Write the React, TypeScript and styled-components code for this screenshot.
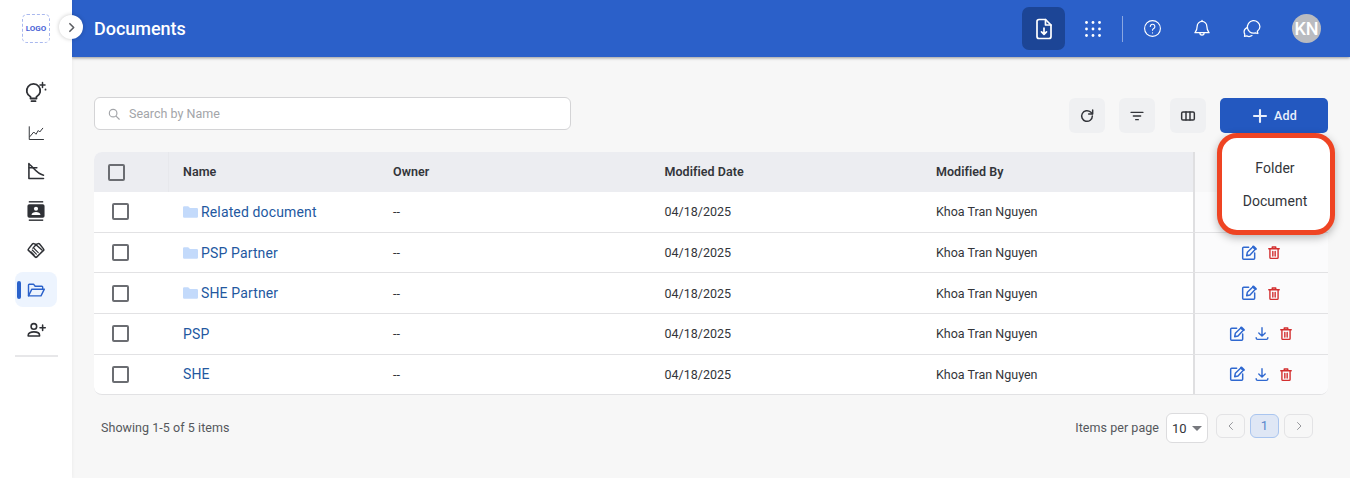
import React from "react";
import styled, { createGlobalStyle } from "styled-components";

const Global = createGlobalStyle`
  html, body { margin: 0; padding: 0; background: #f7f7f7; }
  body { font-family: Roboto, "Liberation Sans", sans-serif; color: #2f3136; }
  * { box-sizing: border-box; }
`;

const Page = styled.div`
  display: flex;
  width: 1350px;
  height: 478px;
  overflow: hidden;
  position: relative;
`;

const Sidebar = styled.aside`
  width: 72px;
  flex: none;
  background: #fff;
  display: flex;
  flex-direction: column;
  align-items: center;
  padding-top: 14px;
  position: relative;
  z-index: 3;
  box-shadow: 1px 0 3px rgba(0, 0, 0, 0.04);
`;

const Logo = styled.div`
  width: 28px;
  height: 29px;
  border: 1px dashed #a9b8ee;
  border-radius: 5px;
  display: flex;
  align-items: center;
  justify-content: center;
  color: #4a63d6;
  font-size: 8px;
  font-weight: 700;
  margin-bottom: 31.5px;
`;

const Toggle = styled.button`
  position: absolute;
  left: 59px;
  top: 15px;
  width: 24px;
  height: 24px;
  padding: 0;
  border: none;
  border-radius: 50%;
  background: #fff;
  box-shadow: 0 0 4px rgba(0, 0, 0, 0.22);
  color: #5c5e63;
  display: flex;
  align-items: center;
  justify-content: center;
`;

const NavItem = styled.div<{ $active?: boolean }>`
  width: 42px;
  height: 35px;
  margin-bottom: 4.6px;
  border-radius: 8px;
  display: flex;
  align-items: center;
  justify-content: center;
  position: relative;
  background: ${(p) => (p.$active ? "#edf4fe" : "transparent")};
  color: ${(p) => (p.$active ? "#2b62cb" : "#2f3136")};
`;

const ActiveMark = styled.span`
  position: absolute;
  left: 2px;
  top: 9px;
  width: 4px;
  height: 18px;
  border-radius: 2px;
  background: #2b62cb;
`;

const NavRule = styled.div`
  width: 43px;
  height: 2px;
  background: #e7e7e9;
  margin-top: 3px;
`;

const Main = styled.main`
  flex: 1;
  min-width: 0;
  display: flex;
  flex-direction: column;
`;

const Header = styled.header`
  height: 57px;
  flex: none;
  background: #2b60c9;
  box-shadow: 0 1px 3px rgba(0, 0, 0, 0.4);
  display: flex;
  align-items: center;
  padding: 0 29px 0 22px;
  color: #fff;
  position: relative;
  z-index: 2;
`;

const Title = styled.h1`
  margin: 0;
  font-size: 18px;
  font-weight: 500;
  letter-spacing: -0.02px;
  flex: 1;
`;

const HeaderActive = styled.div`
  width: 43px;
  height: 43px;
  background: #1c4596;
  border-radius: 7px;
  display: flex;
  align-items: center;
  justify-content: center;
  margin-right: 18px;
`;

const HeaderIcon = styled.div<{ $gap: number }>`
  width: 20px;
  height: 24px;
  display: flex;
  align-items: center;
  justify-content: center;
  margin-right: ${(p) => p.$gap}px;
`;

const HeaderRule = styled.div`
  width: 1px;
  height: 26px;
  background: rgba(255, 255, 255, 0.45);
  margin-right: 19px;
`;

const Avatar = styled.div`
  width: 29px;
  height: 29px;
  border-radius: 50%;
  background: #b9bbc0;
  color: #fff;
  font-size: 18px;
  font-weight: 500;
  display: flex;
  align-items: center;
  justify-content: center;
`;

const Content = styled.div`
  flex: 1;
  padding: 40px 22px 0;
  position: relative;
`;

const Toolbar = styled.div`
  display: flex;
  align-items: flex-start;
  height: 36px;
`;

const Search = styled.div`
  width: 477px;
  height: 33px;
  border: 1px solid #d4d4d6;
  border-radius: 6px;
  background: #fff;
  display: flex;
  align-items: center;
  padding-left: 12px;
  gap: 8px;
  color: #a3a5a9;
  font-size: 12.5px;
`;

const Tools = styled.div`
  margin-left: auto;
  display: flex;
  gap: 14.5px;
  margin-top: 1px;
`;

const ToolButton = styled.button`
  width: 36px;
  height: 35px;
  padding: 0;
  border: none;
  border-radius: 6px;
  background: #eff0f2;
  color: #33353a;
  display: flex;
  align-items: center;
  justify-content: center;
`;

const AddButton = styled.button`
  width: 108px;
  height: 35px;
  padding: 0;
  border: none;
  border-radius: 5px;
  background: #2358c0;
  color: #e9effb;
  font: 500 12.5px Roboto, sans-serif;
  letter-spacing: 0.2px;
  display: flex;
  align-items: center;
  justify-content: center;
  gap: 5px;
`;

const Menu = styled.div`
  position: absolute;
  left: 1145px;
  top: 76px;
  width: 118px;
  height: 102px;
  background: #fff;
  border: 5px solid #ef4423;
  border-radius: 20px;
  box-shadow: 0 3px 8px rgba(0, 0, 0, 0.28);
  z-index: 5;
  display: flex;
  flex-direction: column;
  align-items: center;
  padding: 13px 2px 0 0;
`;

const MenuItem = styled.div`
  height: 33px;
  display: flex;
  align-items: center;
  font-size: 14px;
  letter-spacing: 0.05px;
  color: #33353a;
`;

const Table = styled.div`
  margin-top: 19.2px;
  background: #fff;
  border-radius: 8px;
  border-bottom: 1px solid #e2e2e4;
  overflow: hidden;
`;

const columns = "75px 210px 271.5px 271.5px 271px 1fr";

const HeadRow = styled.div`
  display: grid;
  grid-template-columns: ${columns};
  height: 40px;
  background: #ecedf1;
  font-size: 12.5px;
  font-weight: 600;
  letter-spacing: 0.05px;
  color: #33353a;
`;

const Row = styled.div`
  display: grid;
  grid-template-columns: ${columns};
  height: 40.6px;
  font-size: 12.5px;
  color: #33353a;
  border-bottom: 1px solid #e2e2e4;
  &:last-child {
    height: 39.6px;
    border-bottom: none;
  }
`;

const Cell = styled.div`
  display: flex;
  align-items: center;
  padding-left: 14px;
`;

const HeadCell = styled(Cell)`
  padding-bottom: 1px;
`;

const CheckCell = styled.div`
  display: flex;
  align-items: center;
  padding-left: 18px;
`;

const HeadCheckCell = styled(CheckCell)`
  padding-left: 14px;
  border-right: 1px solid #e7e8ec;
`;

const Check = styled.span`
  width: 17px;
  height: 17px;
  border: 2px solid #6b6d72;
  border-radius: 2px;
  background: #fff;
  display: block;
`;

const HeadCheck = styled(Check)`
  background: transparent;
`;

const NameLink = styled.a`
  color: #23589f;
  font-size: 14px;
  letter-spacing: 0.14px;
  display: flex;
  align-items: center;
  gap: 3px;
`;

const ActionCell = styled.div`
  border-left: 2px solid #dfdfe1;
  background: #fbfbfc;
  display: flex;
  align-items: center;
  justify-content: center;
  gap: 10px;
  padding-right: 2px;
`;

const ActionHead = styled.div`
  border-left: 2px solid #dfdfe1;
  background: #f7f7f8;
`;

const Footer = styled.div`
  display: flex;
  align-items: center;
  margin-top: 16.5px;
  padding: 0 15px 0 7px;
  height: 32px;
  font-size: 12.5px;
  color: #55575c;
  letter-spacing: 0.05px;
`;

const PerPage = styled.span`
  margin-left: auto;
  margin-right: 7px;
`;

const PageSelect = styled.div`
  width: 42px;
  height: 30px;
  border: 1px solid #dcdcde;
  border-radius: 6px;
  background: #fff;
  display: flex;
  align-items: center;
  justify-content: space-between;
  padding: 0 5px 0 5px;
  color: #33353a;
  font-size: 13px;
  margin-right: 8px;
  margin-top: 1px;
`;

const Caret = styled.span`
  width: 0;
  height: 0;
  border-left: 5px solid transparent;
  border-right: 5px solid transparent;
  border-top: 5px solid #77797e;
`;

const PageBtn = styled.div<{ $current?: boolean }>`
  width: 29px;
  height: 24px;
  margin-right: 5px;
  border-radius: 6px;
  border: 1px solid ${(p) => (p.$current ? "#a9c5ef" : "#e3e3e5")};
  background: ${(p) => (p.$current ? "#dfe7f5" : "transparent")};
  color: ${(p) => (p.$current ? "#5a86cc" : "#98999d")};
  font-size: 13px;
  font-weight: 400;
  display: flex;
  align-items: center;
  justify-content: center;
  margin-top: -4px;
  &:last-child {
    margin-right: 0;
  }
`;

type P = { s?: number };
const Svg = ({ s = 20, children, sw = 1.7 }: P & { children: React.ReactNode; sw?: number }) => (
  <svg width={s} height={s} viewBox="0 0 24 24" fill="none" stroke="currentColor" strokeWidth={sw} strokeLinecap="round" strokeLinejoin="round">
    {children}
  </svg>
);

const BulbIcon = () => (
  <Svg s={24} sw={1.8}>
    <path d="M6.5 16.8A6.8 6.8 0 1 1 12.5 16.8V18.5H6.5z" />
    <path d="M7.5 21.2h4" />
    <path d="M18.5 2.5v5M16 5h5" strokeWidth={1.5} />
    <path d="M21.5 9.5v.2" />
  </Svg>
);
const TrendIcon = () => (
  <Svg s={18} sw={1.3}>
    <path d="M3 5v17h19" />
    <path d="M4 18l5-6 3 3 3-5 2 2 4-5" />
  </Svg>
);
const DeclineIcon = () => (
  <Svg s={20} sw={1.9}>
    <path d="M3.5 3v18h17.5" />
    <path d="M4 4c5 3 8 11 17 13" />
    <path d="M4 8h9" />
  </Svg>
);
const ContactIcon = () => (
  <svg width="18" height="22" viewBox="0 0 20 24" fill="#2f3136">
    <rect x="2" y="1" width="16" height="1.6" />
    <rect x="2" y="21.4" width="16" height="1.6" />
    <rect x="0.5" y="4.5" width="19" height="15" rx="2" />
    <circle cx="10" cy="9.5" r="2.3" fill="#fff" />
    <path d="M5 16.5c0-2.5 2.5-3.5 5-3.5s5 1 5 3.5z" fill="#fff" />
  </svg>
);
const HandshakeIcon = () => (
  <Svg s={18} sw={2}>
    <path d="M9 3.5l3 1.2 3-1.2a1.5 1.5 0 0 1 1.5.3l5.500 6.700a1.500 1.500 0 0 1 0 2L12.800 21.500a1.200 1.200 0 0 1-1.600 0L2 12.500a1.500 1.500 0 0 1 0-2l5.500-6.700A1.500 1.500 0 0 1 9 3.500z" />
    <path d="M8 9.5l4-4.5 8 7" />
    <path d="M7 12l5.500 5.500M9.500 10l5.500 5.500M5.500 14.500l4 4" strokeWidth={1.5} />
  </Svg>
);
const FolderOpenIcon = () => (
  <Svg s={20} sw={1.7}>
    <path d="M3 19V6a1 1 0 0 1 1-1h5l2 2.5h8a1 1 0 0 1 1 1V11" />
    <path d="M3 19h15l4-8H7z" />
  </Svg>
);
const PersonAddIcon = () => (
  <Svg s={21} sw={1.8}>
    <circle cx="9" cy="8.5" r="3.2" />
    <path d="M2.5 19.5v-1c0-2.5 3-3.8 6.5-3.8s6.500 1.300 6.500 3.800v1z" />
    <path d="M19 7v6M16 10h6" />
  </Svg>
);

const navIcons = [BulbIcon, TrendIcon, DeclineIcon, ContactIcon, HandshakeIcon, FolderOpenIcon, PersonAddIcon];

const FileDownIcon = () => (
  <Svg s={24} sw={1.7}>
    <path d="M13.5 2.5H7a2 2 0 0 0-2 2v15a2 2 0 0 0 2 2h10a2 2 0 0 0 2-2V8z" />
    <path d="M13.5 2.5V8H19" />
    <path d="M12 11v6M9.5 14.8L12 17.3l2.5-2.5" />
  </Svg>
);
const DotsIcon = () => (
  <svg width="16" height="16" viewBox="0 0 16 16" fill="#fff">
    {[1.5, 8, 14.5].flatMap((y) => [1.5, 8, 14.5].map((x) => <circle key={`${x}-${y}`} cx={x} cy={y} r="1.4" />))}
  </svg>
);
const HelpIcon = () => (
  <Svg s={19} sw={1.4}>
    <circle cx="12" cy="12" r="10" />
    <path d="M9.2 9.5a2.9 2.9 0 1 1 4.4 2.5c-1 .6-1.6 1.2-1.6 2.2" />
    <path d="M12 17.5v.1" />
  </Svg>
);
const BellIcon = () => (
  <Svg s={25} sw={1.5}>
    <path d="M12 3.5a5.8 5.8 0 0 0-5.8 5.8c0 4.7-2 6.7-2.7 7.7h17c-.7-1-2.7-3-2.7-7.7A5.800 5.800 0 0 0 12 3.500z" />
    <path d="M9.5 17.3a2.5 2.5 0 0 0 5 0" />
    <path d="M12 3.5V2.3" />
  </Svg>
);
const ChatIcon = () => (
  <Svg s={25} sw={1.5}>
    <path d="M21.5 10a7.5 7.5 0 1 0-14.8 1.8c.5 2 1 2.7 2.3 4 1.2 1 4 2.5 7 1.5l3 .7-.6-2.8c2-1.3 3.100-3 3.100-5.200z" />
    <path d="M6 11c-2 1-3.5 3-3.5 5 0 1 .3 2 .8 2.7L3 21.5l2.8-.6c1.5.8 4 1 6.2-.4" />
  </Svg>
);

const SearchIcon = () => (
  <Svg s={14} sw={2}>
    <circle cx="10.5" cy="10.5" r="6.5" />
    <path d="M15.5 15.5L21 21" />
  </Svg>
);
const RefreshIcon = () => (
  <Svg s={16} sw={2.2}>
    <path d="M20 12a8 8 0 1 1-2.6-5.9L20 8.5" />
    <path d="M20.5 3v6h-6" />
  </Svg>
);
const FilterIcon = () => (
  <Svg s={16} sw={2}>
    <path d="M3 6.5h18M6.5 12h11M10 17.5h4" />
  </Svg>
);
const ColumnsIcon = () => (
  <Svg s={16} sw={2.2}>
    <rect x="2.5" y="6" width="19" height="12" rx="2" />
    <path d="M9 6v12M15 6v12" />
  </Svg>
);
const PlusIcon = () => (
  <Svg s={18} sw={2.8}>
    <path d="M12 4v16M4 12h16" />
  </Svg>
);
const FolderIcon = () => (
  <svg width="15" height="12" viewBox="0 0 15 12" fill="#c3dafb">
    <path d="M0 1.5A1.2 1.2 0 0 1 1.2.3h4L7 2h6.8A1.2 1.2 0 0 1 15 3.2v7.3a1.2 1.2 0 0 1-1.2 1.2H1.2A1.2 1.2 0 0 1 0 10.5z" />
  </svg>
);
const EditIcon = () => (
  <svg width="16" height="16" viewBox="0 0 24 24" fill="none" stroke="#2f68d0" strokeWidth="2.2" strokeLinecap="round" strokeLinejoin="round">
    <path d="M11.5 3.5H4a1.5 1.5 0 0 0-1.5 1.5v15A1.5 1.5 0 0 0 4 21.5h15a1.5 1.5 0 0 0 1.5-1.5v-8" />
    <path d="M9.5 11l-1 5 5-1 8-8.5-3.8-3.5z" />
    <path d="M18.5 2.5l3.5 3.3" strokeWidth="3.5" />
  </svg>
);
const DownloadIcon = () => (
  <svg width="14" height="15" viewBox="0 0 24 24" fill="none" stroke="#2f68d0" strokeWidth="2.4" strokeLinecap="round" strokeLinejoin="round">
    <path d="M12 2v14M6.5 11l5.5 5.5 5.5-5.5" />
    <path d="M2 19v.5A2.5 2.5 0 0 0 4.5 22h15a2.5 2.5 0 0 0 2.5-2.5V19" />
  </svg>
);
const TrashIcon = () => (
  <svg width="14" height="15" viewBox="0 0 24 24" fill="none" stroke="#d32f2f" strokeWidth="2.4" strokeLinecap="round" strokeLinejoin="round">
    <path d="M3 5.5h18M9 5V2.5h6V5" />
    <path d="M5 6v14.5A1.5 1.5 0 0 0 6.5 22h11a1.5 1.5 0 0 0 1.5-1.5V6" />
    <path d="M10 10v8M14 10v8" />
  </svg>
);
const ChevRight = ({ s = 12, w = 2.6 }: P & { w?: number }) => (
  <Svg s={s} sw={w}>
    <path d="M9 5l7 7-7 7" />
  </Svg>
);
const ChevLeft = ({ s = 12, w = 2.6 }: P & { w?: number }) => (
  <Svg s={s} sw={w}>
    <path d="M15 5l-7 7 7 7" />
  </Svg>
);

type Doc = { name: string; folder: boolean; actions: "none" | "folder" | "file" };
const docs: Doc[] = [
  { name: "Related document", folder: true, actions: "none" },
  { name: "PSP Partner", folder: true, actions: "folder" },
  { name: "SHE Partner", folder: true, actions: "folder" },
  { name: "PSP", folder: false, actions: "file" },
  { name: "SHE", folder: false, actions: "file" },
];

export default function App() {
  return (
    <Page>
      <Global />
      <Sidebar>
        <Logo>LOGO</Logo>
        <Toggle>
          <ChevRight s={13} w={3} />
        </Toggle>
        {navIcons.map((Icon, i) => (
          <NavItem key={i} $active={i === 5}>
            {i === 5 && <ActiveMark />}
            <Icon />
          </NavItem>
        ))}
        <NavRule />
      </Sidebar>
      <Main>
        <Header>
          <Title>Documents</Title>
          <HeaderActive>
            <FileDownIcon />
          </HeaderActive>
          <HeaderIcon $gap={19}>
            <DotsIcon />
          </HeaderIcon>
          <HeaderRule />
          <HeaderIcon $gap={30}>
            <HelpIcon />
          </HeaderIcon>
          <HeaderIcon $gap={30}>
            <BellIcon />
          </HeaderIcon>
          <HeaderIcon $gap={30}>
            <ChatIcon />
          </HeaderIcon>
          <Avatar>KN</Avatar>
        </Header>
        <Content>
          <Toolbar>
            <Search>
              <SearchIcon />
              Search by Name
            </Search>
            <Tools>
              <ToolButton>
                <RefreshIcon />
              </ToolButton>
              <ToolButton>
                <FilterIcon />
              </ToolButton>
              <ToolButton>
                <ColumnsIcon />
              </ToolButton>
              <AddButton>
                <PlusIcon />
                Add
              </AddButton>
            </Tools>
          </Toolbar>
          <Menu>
            <MenuItem>Folder</MenuItem>
            <MenuItem>Document</MenuItem>
          </Menu>
          <Table>
            <HeadRow>
              <HeadCheckCell>
                <HeadCheck />
              </HeadCheckCell>
              <HeadCell>Name</HeadCell>
              <HeadCell>Owner</HeadCell>
              <HeadCell>Modified Date</HeadCell>
              <HeadCell>Modified By</HeadCell>
              <ActionHead />
            </HeadRow>
            {docs.map((d) => (
              <Row key={d.name}>
                <CheckCell>
                  <Check />
                </CheckCell>
                <Cell>
                  <NameLink>
                    {d.folder && <FolderIcon />}
                    {d.name}
                  </NameLink>
                </Cell>
                <Cell>--</Cell>
                <Cell>04/18/2025</Cell>
                <Cell>Khoa Tran Nguyen</Cell>
                <ActionCell>
                  {d.actions !== "none" && <EditIcon />}
                  {d.actions === "file" && <DownloadIcon />}
                  {d.actions !== "none" && <TrashIcon />}
                </ActionCell>
              </Row>
            ))}
          </Table>
          <Footer>
            Showing 1-5 of 5 items
            <PerPage>Items per page</PerPage>
            <PageSelect>
              10
              <Caret />
            </PageSelect>
            <PageBtn>
              <ChevLeft s={12} w={2} />
            </PageBtn>
            <PageBtn $current>1</PageBtn>
            <PageBtn>
              <ChevRight s={12} w={2} />
            </PageBtn>
          </Footer>
        </Content>
      </Main>
    </Page>
  );
}
